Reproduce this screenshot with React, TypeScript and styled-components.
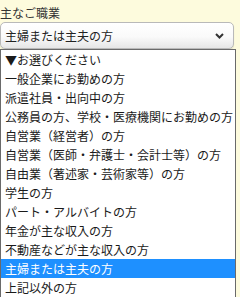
import React from 'react';
import styled, { createGlobalStyle } from 'styled-components';

const GlobalStyle = createGlobalStyle`
  html, body {
    margin: 0;
    padding: 0;
    background: #fdfbdd;
    font-family: "Noto Sans CJK JP", "Liberation Sans", sans-serif;
  }
`;

const Page = styled.div`
  width: 240px;
  height: 297px;
  overflow: hidden;
  padding-top: 5px;
  box-sizing: border-box;
`;

const Label = styled.div`
  font-size: 12px;
  line-height: 16px;
  color: #333;
  margin-bottom: 1px;
`;

const SelectBox = styled.div`
  width: 234px;
  height: 27px;
  box-sizing: border-box;
  display: flex;
  align-items: center;
  justify-content: space-between;
  padding: 0 9px 0 4px;
  border: 1px solid #b9b9b9;
  border-radius: 5px;
  background: linear-gradient(#ffffff 0%, #fafafa 55%, #e6e6e6 100%);
  box-shadow: 0 1px 1px rgba(0, 0, 0, 0.12);
  font-size: 12px;
  color: #222;
`;

const Chevron = styled.svg`
  width: 9px;
  height: 6px;
  margin-top: 1px;
`;

const OptionList = styled.ul`
  list-style: none;
  margin: 0;
  padding: 0;
  width: 236px;
  box-sizing: border-box;
  border: 1px solid #6a6a6a;
  border-bottom: none;
  background: #fff;
`;

const Option = styled.li<{ $selected?: boolean }>`
  height: 19px;
  line-height: 19px;
  padding-left: 4px;
  font-size: 12px;
  white-space: nowrap;
  color: ${(p) => (p.$selected ? '#fff' : '#1a1a1a')};
  background: ${(p) => (p.$selected ? '#1e90ff' : 'transparent')};
`;

const options = [
  '▼お選びください',
  '一般企業にお勤めの方',
  '派遣社員・出向中の方',
  '公務員の方、学校・医療機関にお勤めの方',
  '自営業（経営者）の方',
  '自営業（医師・弁護士・会計士等）の方',
  '自由業（著述家・芸術家等）の方',
  '学生の方',
  'パート・アルバイトの方',
  '年金が主な収入の方',
  '不動産などが主な収入の方',
  '主婦または主夫の方',
  '上記以外の方',
];

const selected = '主婦または主夫の方';

export default function App() {
  return (
    <>
      <GlobalStyle />
      <Page>
        <Label>主なご職業</Label>
        <SelectBox>
          <span>{selected}</span>
          <Chevron viewBox="0 0 9 6">
            <path d="M1 1 L4.5 4.5 L8 1" fill="none" stroke="#333" strokeWidth="2" />
          </Chevron>
        </SelectBox>
        <OptionList>
          {options.map((o) => (
            <Option key={o} $selected={o === selected}>
              {o}
            </Option>
          ))}
        </OptionList>
      </Page>
    </>
  );
}
